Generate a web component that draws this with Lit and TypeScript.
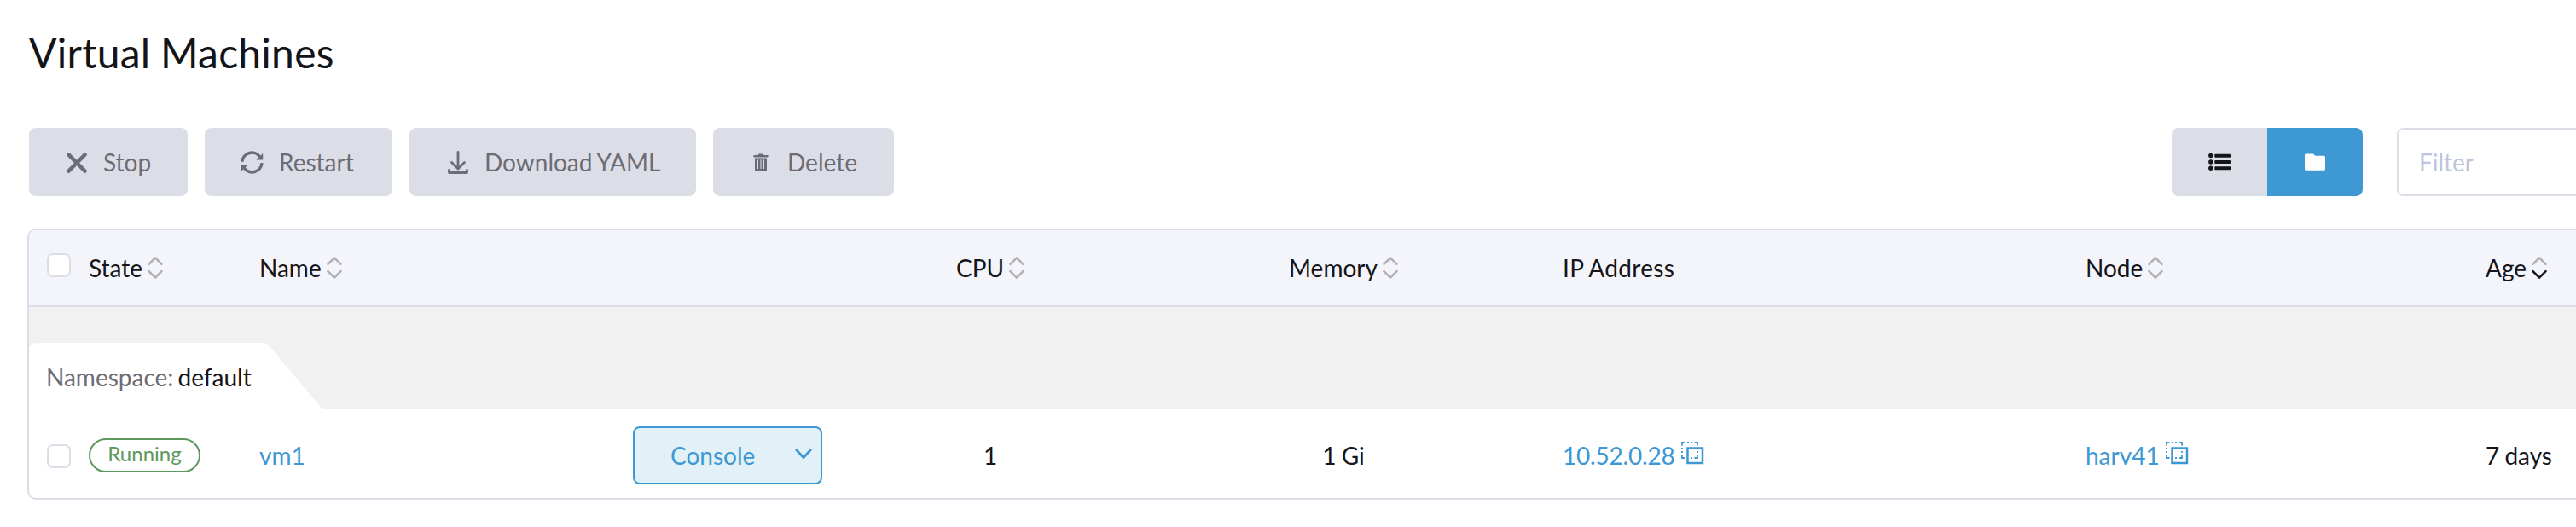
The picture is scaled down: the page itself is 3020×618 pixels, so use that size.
import { LitElement, html, css, svg } from "lit";
import { customElement } from "lit/decorators.js";

const icons = {
  close: html`<svg width="24" height="24" viewBox="0 0 24 24" fill="none" stroke="currentColor" stroke-width="4.4" stroke-linecap="round"><path d="M2.4 2.4 21.6 21.6M21.6 2.4 2.4 21.6"/></svg>`,
  restart: html`<svg width="27" height="27" viewBox="0 0 27 27"><path fill="none" stroke="currentColor" stroke-width="3.5" d="M1.800 12.800A11.500 11.500 0 0 1 22.800 7.200M25 14.200A11.500 11.500 0 0 1 4 19.800"/><path fill="currentColor" d="M26.200 3v7.500h-8zM.6 24v-7.500h8z"/></svg>`,
  download: html`<svg width="24" height="27" viewBox="0 0 24 27" fill="none" stroke="currentColor" stroke-width="2.8" stroke-linecap="round" stroke-linejoin="round"><path d="M12 1.4V20M4.500 13.500 12 21l7.500-7.500M1.500 22.500v3h21v-3"/></svg>`,
  trash: html`<svg width="18" height="21" viewBox="0 0 18 21" fill="currentColor"><path d="M.5 2H5.500L6.500.5h5l1 1.500h5v2.500H.5z"/><path fill-rule="evenodd" d="M2 5.500h14v15H2zM5 7.500v10.500h1V7.500zM8.500 7.500v10.500h1V7.500zM12 7.500v10.500h1V7.500z"/></svg>`,
  list: html`<svg width="26" height="20" viewBox="0 0 26 20" fill="currentColor"><circle cx="2.800" cy="2.500" r="2.700"/><circle cx="2.800" cy="10" r="2.700"/><circle cx="2.800" cy="17.300" r="2.700"/><rect x="7.300" y=".7" width="18.700" height="4" rx=".8"/><rect x="7.300" y="8" width="18.700" height="4" rx=".8"/><rect x="7.300" y="15.300" width="18.700" height="4" rx=".8"/></svg>`,
  folder: html`<svg width="24" height="20" viewBox="0 0 24 20" fill="currentColor"><path d="M1.800.5H10l2.500 2.300H22.500A1.500 1.500 0 0 1 24 4.300V18.200a1.500 1.500 0 0 1-1.500 1.500H1.500A1.500 1.500 0 0 1 0 18.200V2A1.500 1.500 0 0 1 1.800.5z"/></svg>`,
  chevron: html`<svg width="20" height="13" viewBox="0 0 20 13" fill="none" stroke="currentColor" stroke-width="2.800" stroke-linecap="round" stroke-linejoin="round"><path d="M1.800 1.800 10 10.500l8.200-8.700"/></svg>`,
  copy: html`<svg width="27" height="27" viewBox="0 0 27 27" fill="none" stroke="currentColor"><rect x="7.500" y="7.500" width="17.500" height="17.500" stroke-width="2.500"/><path stroke-width="1.800" d="M1 4.500V1h3.500M7 1h2M11 1h2M15.500 1H19v3.500M1 7v2M1 11v2M1 15.500V19h3.500M19 11v2M11 19h2M15.500 19H19v-3.500"/></svg>`,
};

const sorter = (active = false) => html`<svg class="sort" width="18" height="28" viewBox="0 -0.5 18 28" fill="none" stroke-width="2.600" stroke-linecap="round" stroke-linejoin="round">
  ${svg`<path stroke="#b0b0b5" d="M1.500 9.300 9 1.800l7.500 7.500"/><path stroke=${active ? "#141419" : "#b0b0b5"} d="M1.500 17.700 9 25.200l7.500-7.500"/>`}
</svg>`;

@customElement("app-root")
export class AppRoot extends LitElement {
  static styles = css`
    :host {
      display: block;
      box-sizing: border-box;
      width: 3020px;
      height: 618px;
      overflow: hidden;
      background: #fff;
      color: #141419;
      font: 28px/34px Lato, sans-serif;
      word-spacing: -1px;
    }
    *, *::before { box-sizing: border-box; }
    svg { display: block; flex: none; }
    h1 { margin: 0; padding: 33px 0 0 34px; height: 150px; font-size: 48px; line-height: 58px; font-weight: 400; letter-spacing: .25px; }
    .toolbar { display: flex; height: 80px; padding-left: 34px; gap: 20px; }
    .btn { display: flex; align-items: center; height: 80px; border-radius: 8px; background: #dcdee7; color: #6c6c76; white-space: nowrap; }
    .btn svg { margin-top: 1px; }
    .stop { width: 186px; padding-left: 44px; gap: 19px; }
    .restart { width: 220px; padding-left: 42px; gap: 18px; }
    .download { width: 336px; padding-left: 45px; gap: 19px; }
    .delete { width: 212px; padding-left: 47px; gap: 22px; }
    .views { display: flex; margin-left: auto; border-radius: 8px; overflow: hidden; }
    .view { display: grid; place-items: center; width: 112px; background: #dcdee7; }
    .view.on { background: #3d98d3; color: #fff; }
    .filter { width: 230px; margin-left: 20px; margin-right: -20px; padding: 21px 24px; border: 2px solid #dcdee7; border-radius: 8px; color: #bec4de; }
    .table { margin: 38px -20px 0 32px; height: 318px; border: 2px solid #dcdee7; border-radius: 10px; overflow: hidden; }
    .row { display: grid; grid-template-columns: 70px 200px 438px 222px 394px 434px 653px 469px 1fr; align-items: center; }
    .head { height: 90px; background: #f4f5fa; border-bottom: 2px solid #dcdee7; }
    .cell { display: flex; align-items: center; white-space: nowrap; }
    .center { justify-content: center; }
    .ip { padding-left: 40px; }
    .head .ip { letter-spacing: .35px; }
    .body .ip { letter-spacing: -.2px; }
    .sort { margin-left: 6px; }
    .check { width: 28px; height: 28px; margin-left: 21px; border: 2px solid #dcdee7; border-radius: 7px; background: #fff; }
    .head .check { margin-bottom: 6px; }
    .group { display: flex; align-items: flex-end; height: 120px; background: #f1f1f1; }
    .tab { display: flex; height: 78px; }
    .name { width: 276px; padding: 23px 0 0 20px; background: #fff; border-radius: 8px 0 0 0; white-space: nowrap; color: #6c6c76; word-spacing: -2px; }
    .name b { font-weight: 400; color: #141419; }
    .body { height: 104px; padding-bottom: 6px; }
    .body .check { margin-top: 12px; }
    .body .cell { padding-top: 10px; }
    .badge { width: 131px; height: 40px; border: 2px solid #5d995d; border-radius: 20px; color: #5d995d; font-size: 24px; line-height: 32px; text-align: center; }
    .link { color: #3d98d3; }
    .copy { margin: -5px 0 0 7px; }
    .console { display: flex; align-items: center; width: 222px; height: 68px; padding-left: 42px; border: 2px solid #3d98d3; border-radius: 8px; background: #e2f0f8; color: #3d98d3; }
    .console svg { margin: -3px 10px 0 auto; }
  `;

  render() {
    return html`
      <h1>Virtual Machines</h1>
      <div class="toolbar">
        <div class="btn stop">${icons.close}<span>Stop</span></div>
        <div class="btn restart">${icons.restart}<span>Restart</span></div>
        <div class="btn download">${icons.download}<span>Download YAML</span></div>
        <div class="btn delete">${icons.trash}<span>Delete</span></div>
        <div class="views">
          <div class="view">${icons.list}</div>
          <div class="view on">${icons.folder}</div>
        </div>
        <div class="filter">Filter</div>
      </div>
      <div class="table">
        <div class="row head">
          <div class="check"></div>
          <div class="cell"><span class="label">State</span>${sorter()}</div>
          <div class="cell"><span class="label">Name</span>${sorter()}</div>
          <div></div>
          <div class="cell center"><span class="label">CPU</span>${sorter()}</div>
          <div class="cell center"><span class="label">Memory</span>${sorter()}</div>
          <div class="cell ip"><span class="label">IP Address</span></div>
          <div class="cell"><span class="label">Node</span>${sorter()}</div>
          <div class="cell"><span class="label">Age</span>${sorter(true)}</div>
        </div>
        <div class="group">
          <div class="tab">
            <div class="name">Namespace: <b>default</b></div>
            <svg width="68" height="78" viewBox="0 0 68 78" fill="#fff"><path d="M0 0q3.500.5 6 4L68 78H0z"/></svg>
          </div>
        </div>
        <div class="row body">
          <div class="check"></div>
          <div class="cell"><span class="badge">Running</span></div>
          <div class="cell link">vm1</div>
          <div class="cell"><div class="console"><span>Console</span>${icons.chevron}</div></div>
          <div class="cell center">1</div>
          <div class="cell center">1 Gi</div>
          <div class="cell ip link">10.52.0.28<span class="copy">${icons.copy}</span></div>
          <div class="cell link">harv41<span class="copy">${icons.copy}</span></div>
          <div class="cell">7 days</div>
        </div>
      </div>`;
  }
}
